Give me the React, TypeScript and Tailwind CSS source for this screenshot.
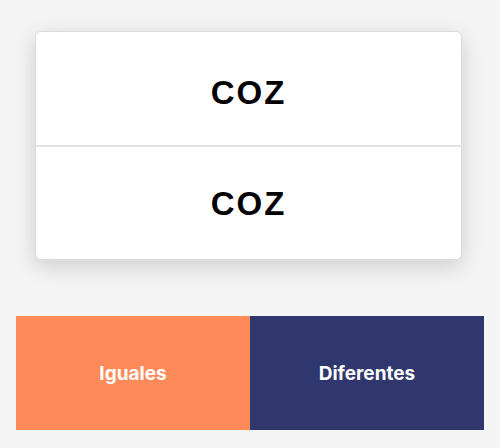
export default function App() {
  return (
    <div className="h-[448px] w-[500px] bg-[#f4f4f4] overflow-hidden flex flex-col">
      <div className="mx-[35px] mt-[31px] w-[427px] rounded-[6px] border border-[#dcdcdc] bg-white shadow-[0_6px_22px_rgba(0,0,0,0.16)] flex flex-col">
        <div
          className="h-[113px] pt-[9px] flex items-center justify-center text-[33px] font-bold tracking-[2px] text-black"
          style={{ fontFamily: '"Liberation Sans", Arial, sans-serif' }}
        >
          COZ
        </div>
        <div className="h-[2px] bg-[#e2e2e2] -mr-[3px]" />
        <div
          className="h-[112px] pt-[2px] flex items-center justify-center text-[33px] font-bold tracking-[2px] text-black"
          style={{ fontFamily: '"Liberation Sans", Arial, sans-serif' }}
        >
          COZ
        </div>
      </div>

      <div className="mt-[56px] mx-[16px] flex h-[114px]">
        <button
          className="flex-1 pt-[3px] bg-[#fe8a5a] text-white text-[19px] font-bold flex items-center justify-center"
          style={{ fontFamily: 'Inter, "Noto Sans", sans-serif' }}
        >
          Iguales
        </button>
        <button
          className="flex-1 pt-[3px] bg-[#30366e] text-white text-[19px] font-bold flex items-center justify-center"
          style={{ fontFamily: 'Inter, "Noto Sans", sans-serif' }}
        >
          Diferentes
        </button>
      </div>
    </div>
  );
}
